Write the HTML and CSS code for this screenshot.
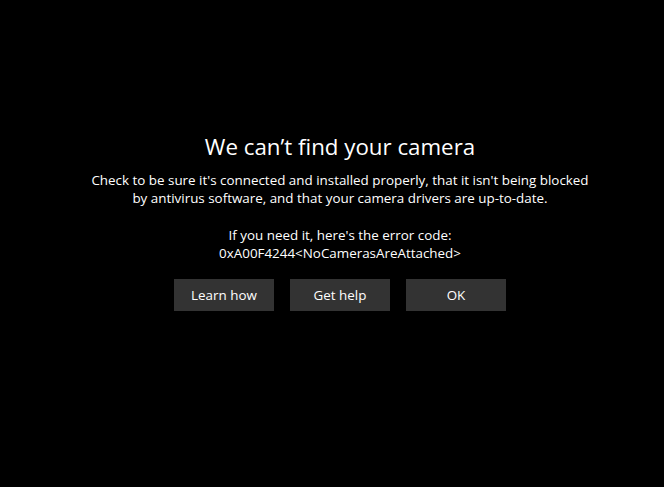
FILE: index.html
```html
<!DOCTYPE html>
<html>
<head>
<meta charset="utf-8">
<link rel="stylesheet" href="styles.css">
</head>
<body>
<main class="page">
  <h1 class="title">We can’t find your camera</h1>
  <p class="desc">Check to be sure it's connected and installed properly, that it isn't being blocked<br>by antivirus software, and that your camera drivers are up-to-date.</p>
  <p class="code">If you need it, here's the error code:<br>0xA00F4244&lt;NoCamerasAreAttached&gt;</p>
  <div class="actions">
    <button class="btn">Learn how</button>
    <button class="btn">Get help</button>
    <button class="btn">OK</button>
  </div>
</main>
</body>
</html>
```
FILE: styles.css
```css
html, body {
  margin: 0;
  padding: 0;
  background: #000;
  height: 100%;
}
.page {
  display: flex;
  flex-direction: column;
  align-items: center;
  padding-top: 131px;
  padding-left: 16px;
  color: #fff;
  font-family: "Open Sans", "Noto Sans", sans-serif;
  text-align: center;
}
.title {
  margin: 0;
  font-size: 22.3px;
  font-weight: 400;
  line-height: 32px;
}
.desc {
  margin: 8px 0 0;
  font-size: 13.4px;
  line-height: 18px;
}
.code {
  margin: 19px 0 0;
  font-size: 13.4px;
  line-height: 18px;
}
.actions {
  display: flex;
  gap: 16px;
  margin-top: 17px;
}
.btn {
  width: 100px;
  height: 32px;
  border: none;
  background: #333;
  color: #fff;
  font-family: inherit;
  font-size: 13.4px;
  padding: 0;
}
```
